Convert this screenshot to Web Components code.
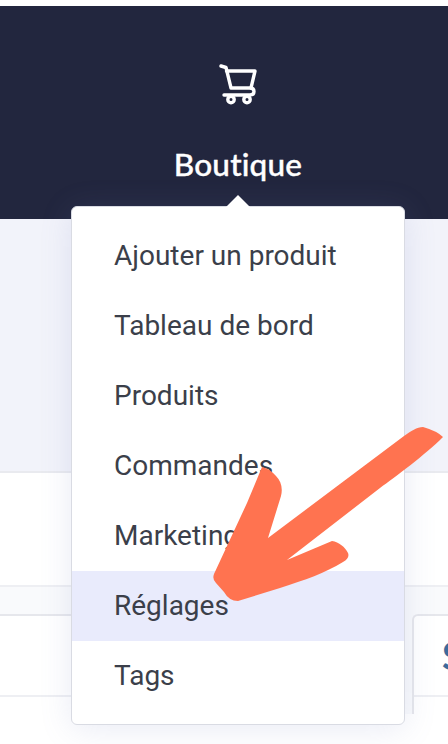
<!DOCTYPE html>
<html lang="fr">
<head>
<meta charset="utf-8">
<title>Boutique</title>
<style>
  html, body { margin: 0; padding: 0; background: #fff; }
  body { width: 448px; height: 744px; overflow: hidden; position: relative; font-family: Roboto, "Liberation Sans", sans-serif; }
</style>
</head>
<body>
<shop-page></shop-page>

<script>
const headerTemplate = document.createElement('template');
headerTemplate.innerHTML = `
<style>
  :host{
    display: flex;
    flex-direction: column;
    align-items: center;
    height: 213px;
    background-color: #22263e;
    color: #fff;
    box-sizing: border-box;
    padding: 57px 0 0 28px;
  }
  svg{
    width: 38px;
    height: 44px;
    display: block;
  }
  .label{
    margin-top: 39px;
    font: 500 31.5px/36px Lato, sans-serif;
    letter-spacing: 0.2px;
    -webkit-text-stroke: 0.4px #fff;
  }
</style>
<svg viewBox="219 63 38 44" fill="none" stroke="#fff" stroke-width="3.4" stroke-linecap="round" stroke-linejoin="round">
  <path d="M221 66 L226 67.5 L231 88 H250 Q254 88 254 91.5 Q254 95 250 95 H224"/>
  <path d="M226.5 71 H255 L251 88"/>
  <circle cx="231" cy="99.5" r="3.2"/>
  <circle cx="247" cy="99.5" r="3.2"/>
</svg>
<div class="label"><slot></slot></div>
`;

class ShopHeader extends HTMLElement {
  constructor() {
    super();
    this.attachShadow({ mode: 'open' }).appendChild(
      headerTemplate.content.cloneNode(true)
    );
  }
}
customElements.define('shop-header', ShopHeader);

const backdropTemplate = document.createElement('template');
backdropTemplate.innerHTML = `
<style>
  :host{
    display: block;
    height: 525px;
    background-color: #fff;
  }
  .tint{
    height: 252px;
    background-color: #f2f3fa;
    border-bottom: 2px solid #e9eaef;
  }
  .band{
    height: 112px;
    border-bottom: 2px solid #eeeff3;
  }
  .row{
    display: flex;
    justify-content: space-between;
    height: 127px;
    background-color: #f9fafc;
  }
  .card{
    background-color: #fff;
    border-top: 2px solid #e6e7ec;
  }
  .card div{
    height: 79px;
    border-bottom: 2px solid #eeeff3;
  }
  .left{
    width: 71px;
    margin-top: 27px;
  }
  .right{
    width: 36px;
    margin-top: 27px;
    border-left: 2px solid #e6e7ec;
    border-top-left-radius: 6px;
    box-sizing: border-box;
    position: relative;
    overflow: hidden;
  }
  .s{
    position: absolute;
    left: 28px;
    top: 17px;
    font: 700 38px/44px Lato, sans-serif;
    color: #3c6a9c;
  }
</style>
<div class="tint"></div>
<div class="band"></div>
<div class="row">
  <div class="card left"><div></div></div>
  <div class="card right"><span class="s">S</span><div></div></div>
</div>
`;

class ShopBackdrop extends HTMLElement {
  constructor() {
    super();
    this.attachShadow({ mode: 'open' }).appendChild(
      backdropTemplate.content.cloneNode(true)
    );
  }
}
customElements.define('shop-backdrop', ShopBackdrop);

const menuTemplate = document.createElement('template');
menuTemplate.innerHTML = `
<style>
  :host{
    display: block;
    position: absolute;
    left: 71px;
    top: 206px;
    width: 334px;
    height: 519px;
    box-sizing: border-box;
    padding: 14px 0 0;
    background-color: #fff;
    border: 1px solid #d9dbe3;
    border-radius: 6px;
    box-shadow: 0 4px 32px rgba(120, 130, 190, 0.16);
  }
  .caret{
    position: absolute;
    left: 154px;
    top: -12px;
    width: 0;
    height: 0;
    border-left: 12px solid transparent;
    border-right: 12px solid transparent;
    border-bottom: 12px solid #fff;
  }
</style>
<span class="caret"></span>
<slot></slot>
`;

class ShopMenu extends HTMLElement {
  constructor() {
    super();
    this.attachShadow({ mode: 'open' }).appendChild(
      menuTemplate.content.cloneNode(true)
    );
  }
}
customElements.define('shop-menu', ShopMenu);

const itemTemplate = document.createElement('template');
itemTemplate.innerHTML = `
<style>
  :host{
    display: block;
    height: 70px;
    padding-left: 42px;
    font: 400 28px/70px Roboto, sans-serif;
    color: #3b3f4a;
  }
  :host([active]){
    background-color: #e9ebfc;
  }
</style>
<slot></slot>
`;

class ShopMenuItem extends HTMLElement {
  constructor() {
    super();
    this.attachShadow({ mode: 'open' }).appendChild(
      itemTemplate.content.cloneNode(true)
    );
  }
}
customElements.define('shop-menu-item', ShopMenuItem);

const arrowTemplate = document.createElement('template');
arrowTemplate.innerHTML = `
<style>
  :host{
    display: block;
    position: absolute;
    left: 0;
    top: 0;
    width: 448px;
    height: 744px;
    pointer-events: none;
  }
  svg{
    display: block;
  }
</style>
<svg width="448" height="744" viewBox="0 0 448 744">
  <path fill="#ff7350" d="M423 427 C417 427 411 431 404 436 L268 538 L281 496 C283 488 281 481 276 476 C272 471 267 468 262 467 L247 503 L214 574 Q212 579 216 583 L224 592 Q229 601 238 601 L280 588 C305 580 325 573 343 562 Q350 558 348 553 C345 547 339 542 332 541 L287 560 L380 488 C395 477 425 455 443 437 Q437 431 423 427 Z"/>
</svg>
`;

class ShopArrow extends HTMLElement {
  constructor() {
    super();
    this.attachShadow({ mode: 'open' }).appendChild(
      arrowTemplate.content.cloneNode(true)
    );
  }
}
customElements.define('shop-arrow', ShopArrow);

const MENU_ITEMS = [
  { label: 'Ajouter un produit' },
  { label: 'Tableau de bord' },
  { label: 'Produits' },
  { label: 'Commandes' },
  { label: 'Marketing' },
  { label: 'Réglages', active: true },
  { label: 'Tags' },
];

const pageTemplate = document.createElement('template');
pageTemplate.innerHTML = `
<style>
  :host{
    display: block;
    width: 448px;
    height: 744px;
    box-sizing: border-box;
    padding-top: 6px;
    position: relative;
  }
</style>
<shop-header>Boutique</shop-header>
<shop-backdrop></shop-backdrop>
<shop-menu></shop-menu>
<shop-arrow></shop-arrow>
`;

class ShopPage extends HTMLElement {
  constructor() {
    super();
    this.attachShadow({ mode: 'open' }).appendChild(
      pageTemplate.content.cloneNode(true)
    );
  }

  connectedCallback() {
    const menu = this.shadowRoot.querySelector('shop-menu');
    MENU_ITEMS.forEach((item) => {
      const el = document.createElement('shop-menu-item');
      el.textContent = item.label;
      if (item.active) el.setAttribute('active', '');
      menu.appendChild(el);
    });
  }
}
customElements.define('shop-page', ShopPage);
</script>
</body>
</html>
